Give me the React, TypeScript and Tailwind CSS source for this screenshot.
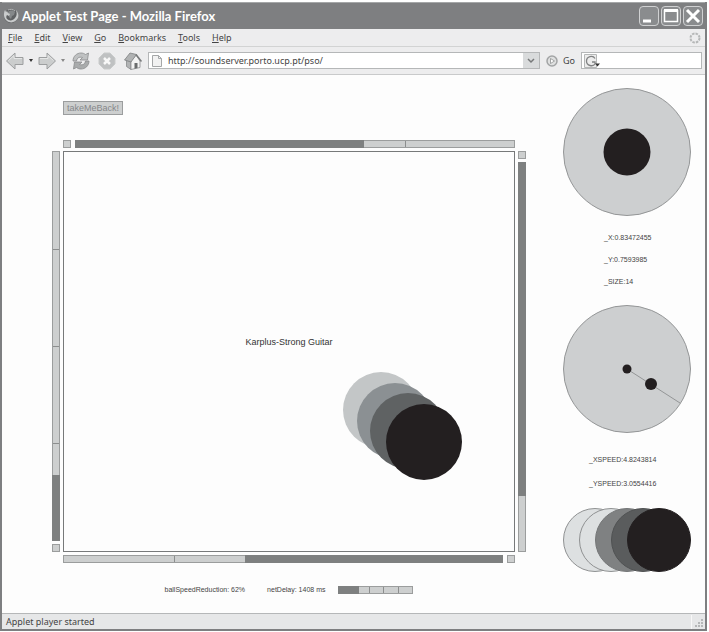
import React from "react";
import { clsx } from "clsx";

const menuItems = ["File", "Edit", "View", "Go", "Bookmarks", "Tools", "Help"];

const trail = [
  { cx: 38, cy: 38, fill: "#c3c6c7" },
  { cx: 52, cy: 49, fill: "#8b9093" },
  { cx: 65, cy: 59, fill: "#5f6263" },
  { cx: 81, cy: 70, fill: "#231f20" },
];

const sizeSteps = [
  { cx: 32, fill: "#dde0e1", stroke: "#8f9192" },
  { cx: 48, fill: "#dde0e1", stroke: "#8f9192" },
  { cx: 64, fill: "#7f8182", stroke: "#747677" },
  { cx: 80, fill: "#5a5c5d", stroke: "#505253" },
  { cx: 96, fill: "#231f20", stroke: "#231f20" },
];

type MeterProps = {
  label: string;
  value: number;
  ticks: number[];
  vertical?: boolean;
  fromEnd?: boolean;
  className?: string;
};

function Meter({ label, value, ticks, vertical, fromEnd, className }: MeterProps) {
  return (
    <div
      role="meter"
      aria-label={label}
      aria-valuenow={value}
      aria-valuemin={0}
      aria-valuemax={100}
      className={clsx("relative flex border border-[#9b9d9d] bg-[#cdcfcf]", vertical && "flex-col", fromEnd && "justify-end", className)}
    >
      {ticks.map((tick) => (
        <span
          key={tick}
          className={clsx("absolute bg-[#8c8e8e]", vertical ? "inset-x-0 h-px" : "inset-y-0 w-px")}
          style={vertical ? { top: `${tick}%` } : { left: `${tick}%` }}
        />
      ))}
      <div
        className="relative bg-[#7e8080] outline outline-[#7e8080]"
        style={vertical ? { height: `${value}%` } : { width: `${value}%` }}
      />
    </div>
  );
}

function Toggle({ label }: { label: string }) {
  return (
    <input
      type="checkbox"
      aria-label={label}
      className="size-2 shrink-0 appearance-none border border-[#9b9d9d] bg-[#cdcfcf]"
    />
  );
}

function FirefoxLogo() {
  return (
    <svg viewBox="0 0 16 16" className="size-4 shrink-0">
      <circle cx="8" cy="8" r="7" fill="#5f6163" />
      <path d="M5 4c2-2 5-2 7 0l-1 3-2 1-1 3-2-2z" fill="#85888a" />
      <path
        d="M2 2C0 6 1 11 4 13c4 3 9 1 11-3 1-3 0-6-2-8 1 3 1 6-1 8-2 3-6 3-8 1C3 10 3 8 4 7l2 1 1-2-2-1-1-2-1 1z"
        fill="#c9cbcc"
      />
      <path d="M5 2c2-1 5-1 7 1" stroke="#b5b7b8" fill="none" />
    </svg>
  );
}

function Arrow({ flip }: { flip?: boolean }) {
  return (
    <svg viewBox="0 0 18 18" className={clsx("size-[18px]", flip && "-scale-x-100")}>
      <path d="M.5 9 9 1v4.500h8v7H9V17z" fill="#cbcdcd" stroke="#9c9e9f" strokeLinejoin="round" />
      <path d="M2.500 8.500 8 3.500v3h8" fill="none" stroke="#e5e6e6" />
    </svg>
  );
}

function Caret({ className }: { className?: string }) {
  return (
    <svg viewBox="0 0 4 3" className={clsx("h-[3px] w-1", className)}>
      <path d="M0 0h4L2 3z" fill="currentColor" />
    </svg>
  );
}

function ReloadIcon() {
  return (
    <svg viewBox="0 0 18 18" className="size-[18px]" stroke="#8a8c8d" strokeWidth=".8" strokeLinejoin="round">
      <path d="M1 9C1 4 5 1 9 1c2 0 3 .5 4.500 1.500L16.500 1l-1 7H8l2.500-2.500C7 4.500 5 6 4.500 9z" fill="#bfc1c2" />
      <path d="M17 9c0 5-4 8-8 8-2 0-3-.5-4.500-1.500L1.500 17l1-7H10l-2.500 2.500C11 13.500 13 12 13.500 9z" fill="#a9abac" />
    </svg>
  );
}

function StopIcon() {
  return (
    <svg viewBox="0 0 18 18" className="size-[18px]">
      <path d="M6 1h6l5 5v6l-5 5H6l-5-5V6z" fill="#bfc1c2" stroke="#c9cbcb" strokeLinejoin="round" />
      <path d="m6 6 6 6M12 6l-6 6" stroke="#f8f8f8" strokeWidth="2.500" />
    </svg>
  );
}

function HomeIcon() {
  return (
    <svg viewBox="0 0 18 18" className="size-[18px]" strokeLinejoin="round">
      <path d="M2.500 8v6.500L7 17.500V9L5 5z" fill="#b2b4b5" stroke="#888a8b" strokeWidth=".8" />
      <path d="M7 9v8.500l9-2V9l-4-6z" fill="#f3f3f3" stroke="#8a8c8d" strokeWidth=".8" />
      <path d="M.5 8 6 1l6.500 1.500L7 10z" fill="#b0b2b3" stroke="#7e8081" strokeWidth=".8" />
      <path d="m12 2.500 5.500 7" stroke="#77797a" strokeWidth="1.500" />
      <path d="M10.500 11h3v5l-3 .8z" fill="#6a6c6d" />
    </svg>
  );
}

function TitleBar() {
  const button = "flex size-5 items-center justify-center rounded-sm border border-[#d0d1d2] bg-[#8a8c8e]";
  return (
    <header className="flex h-[27px] shrink-0 items-center gap-[3px] border-t border-[#a5a7a8] bg-[#7e7f81] pr-0.5 pl-px">
      <FirefoxLogo />
      <h1 className="grow font-['Lato',sans-serif] text-[13px] leading-4 font-bold text-white">
        Applet Test Page - Mozilla Firefox
      </h1>
      <div className="flex gap-0.5">
        <button aria-label="Minimize" className={button}>
          <svg viewBox="0 0 18 18" className="size-[18px]">
            <path d="M3 14h8" stroke="#fff" strokeWidth="3" />
          </svg>
        </button>
        <button aria-label="Maximize" className={button}>
          <svg viewBox="0 0 18 18" className="size-[18px]" fill="none" stroke="#fff">
            <path d="M2.500 3v11.500h13V3" strokeWidth="1.500" />
            <path d="M2 3.500h14" strokeWidth="3" />
          </svg>
        </button>
        <button aria-label="Close" className={button}>
          <svg viewBox="0 0 18 18" className="size-[18px]">
            <path d="m3 3 12 12M15 3 3 15" stroke="#fff" strokeWidth="3" />
          </svg>
        </button>
      </div>
    </header>
  );
}

function MenuBar() {
  return (
    <nav className="flex h-[18px] shrink-0 items-center gap-3 border-b border-[#d2d3d3] bg-[#ededee] pr-[3px] pl-1.5">
      {menuItems.map((item) => (
        <button key={item}>
          <span className="underline underline-offset-1">{item[0]}</span>
          {item.slice(1)}
        </button>
      ))}
      <svg viewBox="0 0 14 14" className="ml-auto size-[14px]">
        <circle cx="7" cy="7" r="4.500" fill="none" stroke="#b5b7b7" strokeWidth="2" strokeDasharray="2.500 1.030" />
      </svg>
    </nav>
  );
}

function Toolbar() {
  return (
    <div className="flex h-7 shrink-0 items-center border-b border-[#c9cacb] bg-[#ededee] pr-[3px] pl-1">
      <div className="flex items-center gap-[5px]">
        <button aria-label="Back">
          <Arrow />
        </button>
        <Caret className="text-[#333]" />
        <button aria-label="Forward">
          <Arrow flip />
        </button>
        <Caret className="text-[#888]" />
      </div>
      <div className="ml-[7px] flex items-center gap-2">
        <button aria-label="Reload">
          <ReloadIcon />
        </button>
        <button aria-label="Stop">
          <StopIcon />
        </button>
        <button aria-label="Home">
          <HomeIcon />
        </button>
      </div>
      <div className="ml-1.5 flex h-[17px] min-w-0 grow items-center border border-[#b5b7b8] bg-white pl-[3px]">
        <svg viewBox="0 0 10 12" className="h-3 w-2.5 shrink-0" fill="#f2f2f2" stroke="#a5a7a8">
          <path d="M.5.5h6l3 3v8h-9z" />
          <path d="M6.500.5v3h3" fill="none" />
        </svg>
        <input
          aria-label="Address"
          defaultValue="http://soundserver.porto.ucp.pt/pso/"
          className="min-w-0 grow px-1.5 outline-none"
        />
        <button aria-label="Show history" className="flex h-[15px] w-4 items-center justify-center bg-[#d9dbdc]">
          <svg viewBox="0 0 8 6" className="h-1.5 w-2">
            <path d="m1 1 3 3 3-3" fill="none" stroke="#77797a" strokeWidth="1.500" />
          </svg>
        </button>
      </div>
      <button className="mx-1.5 flex items-center gap-[5px]">
        <svg viewBox="0 0 12 12" className="size-3">
          <circle cx="6" cy="6" r="5" fill="#dfe0e0" stroke="#a2a4a5" strokeWidth="1.500" />
          <path d="M4.500 3.500v5L8.500 6z" fill="#fff" stroke="#8e9091" strokeWidth=".8" />
        </svg>
        Go
      </button>
      <div className="flex h-[17px] w-[121px] items-center border border-[#b5b7b8] bg-white pl-0.5">
        <svg viewBox="0 0 17 14" className="h-3.5 w-[17px] shrink-0">
          <path d="M.5.5h12v13H.5z" fill="#ececec" stroke="#b5b7b7" />
          <path d="M11 4.500C9 1 2.500 2 2.500 7s6.500 6 8.500 3V8H8" fill="none" stroke="#808283" strokeWidth="1.300" />
          <path d="M11 9.500h5l-2.500 3z" fill="#333" />
        </svg>
        <input aria-label="Search" className="min-w-0 grow outline-none" />
      </div>
    </div>
  );
}

function Stage() {
  return (
    <section className="flex min-w-0 grow flex-col pt-[26px] text-[7px] leading-2">
      <button className="ml-[11px] h-[14px] self-start border border-[#9b9d9e] bg-[#cdcfcf] px-[3px] text-[9px] leading-3 text-[#85878a]">
        takeMeBack!
      </button>

      <div className="mt-[25px] grid grow grid-cols-[8px_1fr_8px] grid-rows-[8px_1fr_8px] gap-[3px]">
        <div className="col-start-2 flex gap-1">
          <Toggle label="Lock top" />
          <Meter label="Top" value={65.5} ticks={[75]} className="grow" />
        </div>
        <div className="col-start-1 row-start-2 flex flex-col gap-[3px]">
          <Meter label="Left" value={16.5} ticks={[25, 50, 75]} vertical fromEnd className="grow" />
          <Toggle label="Lock left" />
        </div>
        <div className="relative col-start-2 row-start-2 flex items-center justify-center border border-[#77797a]">
          <p className="pb-5 text-[9px] text-[#333]">Karplus-Strong Guitar</p>
          <svg viewBox="0 0 119 108" className="absolute right-[52px] bottom-[71px] h-[108px] w-[119px]">
            {trail.map((ball) => (
              <circle key={ball.cx} cx={ball.cx} cy={ball.cy} r="38" fill={ball.fill} />
            ))}
          </svg>
        </div>
        <div className="col-start-3 row-start-2 flex flex-col gap-[3px]">
          <Toggle label="Lock right" />
          <Meter label="Right" value={85.5} ticks={[]} vertical className="grow" />
        </div>
        <div className="col-start-2 row-start-3 flex gap-1">
          <Meter label="Bottom" value={58.5} ticks={[25]} fromEnd className="grow" />
          <Toggle label="Lock bottom" />
        </div>
      </div>

      <div className="flex h-[50px] items-center justify-center pt-1 text-[#444]">
        <span>ballSpeedReduction: 62%</span>
        <span className="ml-[22px]">netDelay: 1408 ms</span>
        <Meter label="Net delay" value={26} ticks={[40, 60, 80]} className="ml-[13px] h-2 w-[75px]" />
      </div>
    </section>
  );
}

function Readouts() {
  return (
    <aside className="flex w-32 shrink-0 flex-col pt-[13px] text-[7px] leading-2 text-[#444]">
      <svg viewBox="0 0 128 128" className="size-32">
        <circle cx="64" cy="64" r="63.500" fill="#cdcfd0" stroke="#949697" />
        <circle cx="64" cy="64" r="23.500" fill="#231f20" />
      </svg>
      <div className="mt-[18px] ml-[41px] flex flex-col gap-[14px]">
        <p>_X:0.83472455</p>
        <p>_Y:0.7593985</p>
        <p>_SIZE:14</p>
      </div>
      <svg viewBox="0 0 128 128" className="mt-[19px] size-32">
        <circle cx="64" cy="64" r="63.500" fill="#cdcfd0" stroke="#949697" />
        <path d="m64 64 53 34" stroke="#949697" />
        <circle cx="64" cy="64" r="4.500" fill="#231f20" />
        <circle cx="88" cy="79" r="6" fill="#231f20" />
      </svg>
      <div className="mt-[23px] ml-[26px] flex flex-col gap-4">
        <p>_XSPEED:4.8243814</p>
        <p>_YSPEED:3.0554416</p>
      </div>
      <svg viewBox="0 0 128 64" className="mt-5 h-16 w-32">
        {sizeSteps.map((step) => (
          <circle key={step.cx} cx={step.cx} cy="32" r="31.500" fill={step.fill} stroke={step.stroke} />
        ))}
      </svg>
    </aside>
  );
}

export default function App() {
  return (
    <div className="flex min-h-screen flex-col bg-white pt-0.5 pr-0.5 pb-px font-['Liberation_Sans',sans-serif]">
      <div className="flex grow flex-col border-x-2 border-b-2 border-[#7e7f81] bg-[#fdfdfd]">
        <TitleBar />
        <div className="font-['Noto_Sans',sans-serif] text-[9px] leading-3 text-[#444]">
          <MenuBar />
          <Toolbar />
        </div>
        <main className="flex grow gap-[37px] pr-[14px] pl-[50px]">
          <Stage />
          <Readouts />
        </main>
        <footer className="flex h-4 shrink-0 items-center justify-between border-t border-[#b5b7b8] bg-[#e6e7e8] pl-1 font-['Noto_Sans',sans-serif] text-[9px] leading-3 text-[#444]">
          <span>Applet player started</span>
          <svg viewBox="0 0 14 14" className="size-[14px]" fill="#b5b7b8">
            <path d="M0 0h1v14H0z" fill="#f8f8f8" />
            <path d="M10 4h2v2h-2zM7 7h2v2H7zM10 7h2v2h-2zM4 10h2v2H4zM7 10h2v2H7zM10 10h2v2h-2z" />
          </svg>
        </footer>
      </div>
    </div>
  );
}
